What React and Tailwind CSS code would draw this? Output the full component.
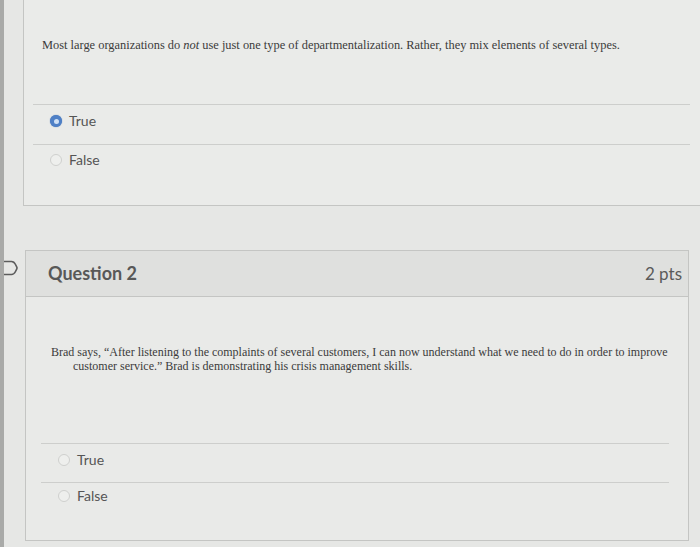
import React from "react";

const serif = { fontFamily: '"Liberation Serif", "Times New Roman", serif' };
const sans = { fontFamily: 'Lato, "Open Sans", sans-serif' };

function Radio({ checked }) {
  if (checked) {
    return (
      <span className="w-[12px] h-[12px] rounded-full bg-[#4f80c6] flex items-center justify-center shrink-0 shadow-[0_0_1px_#3d6bb0]">
        <span className="w-[5px] h-[5px] rounded-full bg-[#cfe0f5]" />
      </span>
    );
  }
  return (
    <span className="w-[12px] h-[12px] rounded-full border border-[#cfd0ce] bg-[#eeefed] shrink-0" />
  );
}

function Option({ label, checked, pt }) {
  return (
    <div className={`flex items-center gap-[7px] pl-[17px] ${pt}`} style={sans}>
      <Radio checked={checked} />
      <span className="text-[14px] leading-[16px] text-[#555]">{label}</span>
    </div>
  );
}

function Divider() {
  return <div className="h-px bg-[#cdcecc]" />;
}

function FlagIcon() {
  return (
    <svg width="14" height="20" viewBox="0 0 14 20" fill="none">
      <path
        d="M0 3.5 H7.5 C9.5 3.5 10.5 4.5 11.5 6.5 L12.8 9.2 C13.1 9.8 13.1 10.2 12.8 10.8 L11.5 13.5 C10.5 15.5 9.5 16.5 7.5 16.5 H0"
        stroke="#5c5c5c"
        strokeWidth="1.6"
      />
    </svg>
  );
}

export default function App() {
  return (
    <div className="w-[700px] h-[547px] overflow-hidden bg-[#e6e7e5] border-l-[4px] border-[#a9aaa8] flex flex-col">
      {/* question 1 (tail end) */}
      <div className="ml-[19px] h-[206px] border-l border-b border-[#c4c5c3] bg-[#eaebe9] shrink-0">
        <p className="pt-[37px] pl-[18px] text-[12.4px] leading-[16px] text-[#3b3b3b]" style={serif}>
          Most large organizations do <em>not</em> use just one type of departmentalization. Rather, they mix elements of several types.
        </p>
        <div className="mt-[51px] ml-[9px] mr-[10px]">
          <Divider />
          <Option label="True" checked pt="pt-[8px]" />
          <div className="mt-[15px]">
            <Divider />
          </div>
          <Option label="False" pt="pt-[7px]" />
        </div>
      </div>

      {/* question 2 */}
      <div className="flex mt-[44px]">
        <div className="w-[21px] shrink-0 pt-[8px]">
          <FlagIcon />
        </div>
        <div className="flex-1 mr-[11px] h-[291px] border border-[#c4c5c3] bg-[#e9eae8]">
          <div className="h-[46px] bg-[#dfe0de] border-b border-[#c4c5c3] flex items-center justify-between pl-[22px] pr-[6px]" style={sans}>
            <span className="text-[18px] font-bold text-[#585858]">Question 2</span>
            <span className="text-[17px] text-[#5a5a5a]">2 pts</span>
          </div>
          <div className="pt-[48px] pl-[25px] text-[12px] leading-[14px] text-[#3b3b3b]" style={serif}>
            <p className="whitespace-nowrap">
              Brad says, “After listening to the complaints of several customers, I can now understand what we need to do in order to improve
            </p>
            <p className="pl-[22px]">customer service.” Brad is demonstrating his crisis management skills.</p>
          </div>
          <div className="mt-[70px] ml-[15px] mr-[19px]">
            <Divider />
            <Option label="True" pt="pt-[8px]" />
            <div className="mt-[14px]">
              <Divider />
            </div>
            <Option label="False" pt="pt-[5px]" />
          </div>
        </div>
      </div>
    </div>
  );
}
